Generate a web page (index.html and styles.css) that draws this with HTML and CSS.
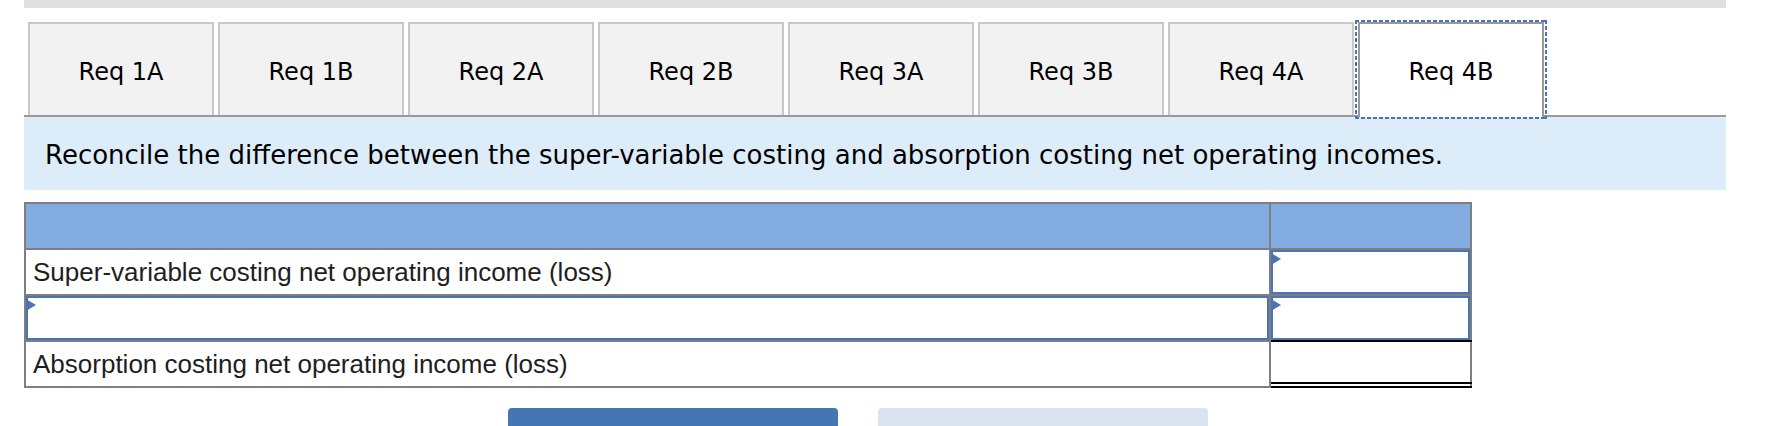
FILE: index.html
```html
<!DOCTYPE html>
<html>
<head>
<meta charset="utf-8">
<link rel="stylesheet" href="styles.css">
</head>
<body>
<div class="page">
  <div class="topbar"></div>
  <div class="tabs">
    <div class="tab">Req 1A</div>
    <div class="tab">Req 1B</div>
    <div class="tab">Req 2A</div>
    <div class="tab">Req 2B</div>
    <div class="tab">Req 3A</div>
    <div class="tab">Req 3B</div>
    <div class="tab">Req 4A</div>
    <div class="tab active">Req 4B</div>
  </div>
  <div class="band">Reconcile the difference between the super-variable costing and absorption costing net operating incomes.</div>
  <div class="grid">
    <div class="cell head"></div>
    <div class="cell head"></div>
    <div class="cell label">Super-variable costing net operating income (loss)</div>
    <div class="cell"><div class="input"></div></div>
    <div class="cell"><div class="input"></div></div>
    <div class="cell"><div class="input"></div></div>
    <div class="cell label">Absorption costing net operating income (loss)</div>
    <div class="cell total"></div>
  </div>
  <div class="buttons">
    <div class="btn primary"></div>
    <div class="btn secondary"></div>
  </div>
</div>
</body>
</html>
```

FILE: styles.css
```css
html, body {
  margin: 0;
  padding: 0;
  background: #ffffff;
  overflow: hidden;
}

.page {
  margin-left: 24px;
  width: 1702px;
}

.topbar {
  height: 8px;
  background: #e0e0e0;
}

.tabs {
  display: flex;
  gap: 4px;
  padding-left: 4px;
  margin-top: 14px;
  height: 93px;
  border-bottom: 2px solid #9a9a9a;
}

.tab {
  position: relative;
  box-sizing: border-box;
  width: 186px;
  height: 93px;
  border: 2px solid #c8c8c8;
  border-bottom: none;
  background: #f2f2f2;
  display: flex;
  align-items: center;
  justify-content: center;
  padding-top: 4px;
  font-family: "DejaVu Sans", Verdana, sans-serif;
  font-size: 24px;
  color: #000;
}

.tab.active {
  background: #ffffff;
  border-color: #999999;
  height: 95px;
  margin-bottom: -2px;
  padding-top: 2px;
}

.tab.active::after {
  content: "";
  position: absolute;
  top: -4px;
  left: -5px;
  right: -5px;
  bottom: -2px;
  background:
    repeating-linear-gradient(90deg, #4a74b4 0 4px, transparent 4px 6px) top left / 100% 2px no-repeat,
    repeating-linear-gradient(90deg, #4a74b4 0 4px, transparent 4px 6px) bottom left / 100% 2px no-repeat,
    repeating-linear-gradient(180deg, #4a74b4 0 4px, transparent 4px 6px) top left / 2px 100% no-repeat,
    repeating-linear-gradient(180deg, #4a74b4 0 4px, transparent 4px 6px) top right / 2px 100% no-repeat;
}

.band {
  height: 73px;
  background: #ddecf9;
  display: flex;
  align-items: center;
  padding-left: 21px;
  padding-top: 2px;
  box-sizing: border-box;
  font-family: "DejaVu Sans", Verdana, sans-serif;
  font-size: 26px;
  color: #000;
}

.grid {
  margin-top: 12px;
  width: 1448px;
  box-sizing: border-box;
  display: grid;
  grid-template-columns: 1243px 199px;
  grid-auto-rows: 44px;
  gap: 2px;
  padding: 2px;
  background: #7f7f7f;
}

.cell {
  position: relative;
  background: #ffffff;
  display: flex;
}

.cell.head {
  background: #82abdf;
}

.cell.label {
  align-items: center;
  padding-left: 7px;
  font-family: "Liberation Sans", Arial, sans-serif;
  font-size: 26px;
  color: #1e1e1e;
}

.input {
  position: relative;
  flex: 1;
  box-sizing: border-box;
  border: 2px solid #4a74b4;
  background: #ffffff;
}

.input::before {
  content: "";
  position: absolute;
  left: -2px;
  top: 1px;
  width: 0;
  height: 0;
  border-left: 10px solid #4a74b4;
  border-top: 6px solid transparent;
  border-bottom: 6px solid transparent;
}

.cell.total::before {
  content: "";
  position: absolute;
  left: 0;
  right: -2px;
  top: -2px;
  height: 2px;
  background: #000;
}

.cell.total::after {
  content: "";
  position: absolute;
  left: 0;
  right: -2px;
  bottom: -2px;
  height: 2px;
  border-top: 2px solid #000;
  border-bottom: 2px solid #000;
}

.buttons {
  display: flex;
  gap: 40px;
  margin-top: 20px;
  padding-left: 484px;
}

.btn {
  width: 330px;
  height: 40px;
  border-radius: 4px 4px 0 0;
}

.btn.primary {
  background: #4675b3;
}

.btn.secondary {
  background: #dae4f0;
}
```
